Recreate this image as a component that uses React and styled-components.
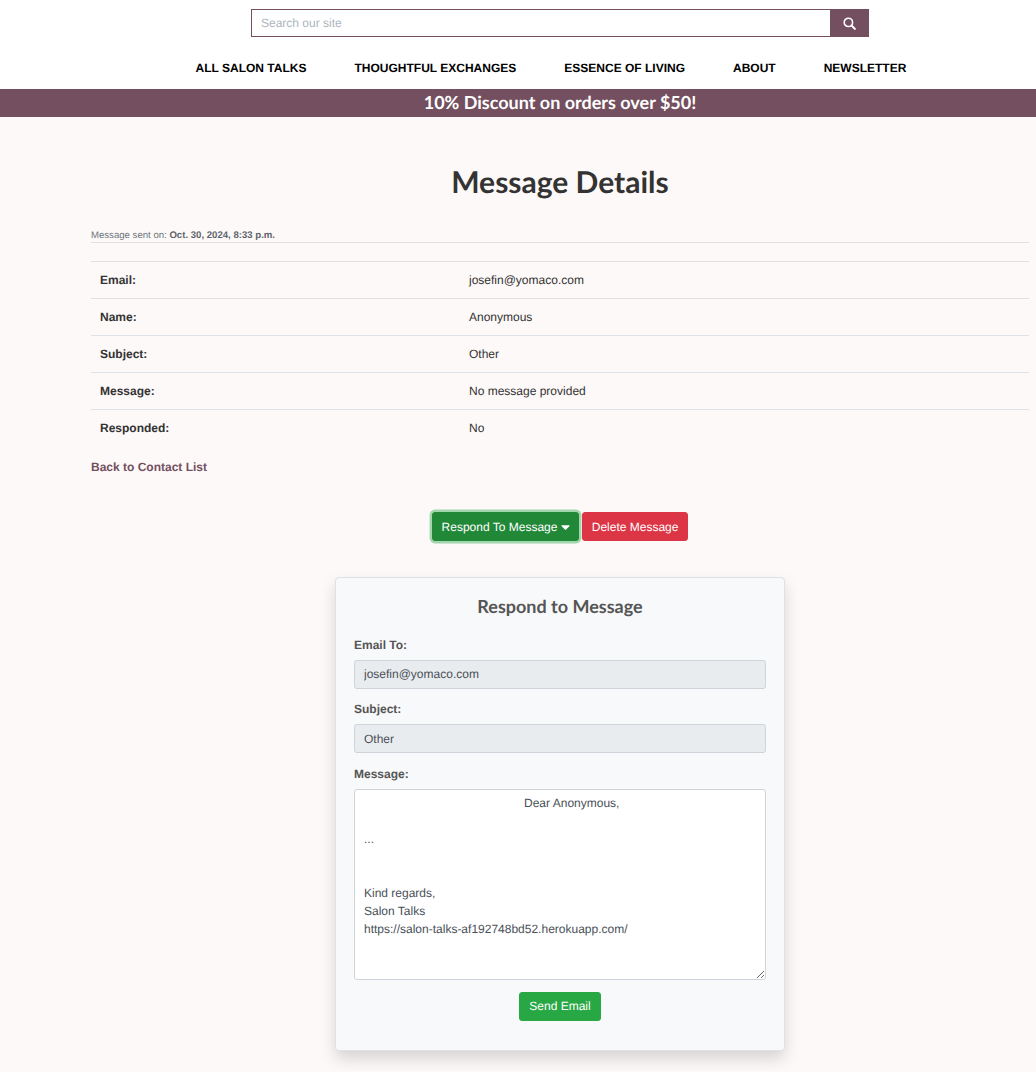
import React from 'react'
import styled, { createGlobalStyle } from 'styled-components'
import { FaCaretDown } from 'react-icons/fa'

const GlobalStyle = createGlobalStyle`
  * { box-sizing: border-box; }
  html, body { margin: 0; padding: 0; }
  body {
    background: #fff;
    font-family: "Liberation Sans", Arial, sans-serif;
    color: #333;
    text-rendering: geometricPrecision;
  }
  input, textarea, button { text-rendering: geometricPrecision; }
`

const Header = styled.header`
  background: #fff;
  height: 89px;
  padding-top: 9px;
`

const SearchForm = styled.form`
  display: flex;
  width: 618px;
  height: 28px;
  margin-left: 251px;
`

const SearchInput = styled.input`
  flex: 1;
  min-width: 0;
  border: 1px solid #734f5f;
  border-right: 0;
  outline: 0;
  padding: 0 9px;
  font: 12px "Liberation Sans", Arial, sans-serif;
  &::placeholder { color: #adb5bd; opacity: 1; }
`

const SearchButton = styled.button`
  width: 39px;
  border: 0;
  padding: 0;
  background: #734f5f;
  color: #fff;
  display: flex;
  align-items: center;
  justify-content: center;
`

const Nav = styled.nav`
  display: flex;
  gap: 48px;
  margin: 24px 0 0 195.6px;
`

const NavLink = styled.a`
  color: #000;
  font-size: 12px;
  font-weight: 700;
  line-height: 15px;
  text-decoration: none;
  white-space: nowrap;
`

const Banner = styled.div`
  height: 28px;
  padding: 0 7px 0 91px;
  background: #734f5f;
  color: #fff;
  text-align: center;
  font: 700 18px/27px Lato, sans-serif;
`

const Main = styled.main`
  background: #fdf9f8;
  height: 955px;
  padding: 46px 7px 0 91px;
  overflow: hidden;
`

const Title = styled.h1`
  margin: 0;
  text-align: center;
  color: #333;
  font: 700 30px/38px Lato, sans-serif;
`

const SentLine = styled.p`
  margin: 28px 0 0;
  border-bottom: 1px solid #dee2e6;
  color: #6c757d;
  font-size: 9.6px;
  line-height: 13px;
`

const SentDate = styled.strong`
  font-weight: 700;
  color: #5d646b;
`

const DetailsTable = styled.dl`
  margin: 18px 0 0;
  border-top: 1px solid #dee2e6;
`

const DetailRow = styled.div`
  display: grid;
  grid-template-columns: 369px 1fr;
  height: 37px;
  align-items: center;
  padding-left: 9px;
  border-bottom: 1px solid #dee2e6;
  font-size: 12px;
  &:last-child { border-bottom-color: transparent; }
`

const DetailTerm = styled.dt`
  font-weight: 700;
`

const DetailValue = styled.dd`
  margin: 0;
`

const BackLink = styled.a`
  display: block;
  margin-top: 13px;
  color: #734f5f;
  font-size: 12px;
  font-weight: 700;
  line-height: 15px;
  text-decoration: none;
`

const Actions = styled.div`
  display: flex;
  justify-content: center;
  gap: 3px;
  margin-top: 37px;
`

const Button = styled.button`
  height: 29px;
  padding: 0 9px;
  border: 1px solid ${p => p.$color};
  border-radius: 3px;
  background: ${p => p.$color};
  color: #fff;
  font: 12px "Liberation Sans", Arial, sans-serif;
  display: inline-flex;
  align-items: center;
  white-space: pre;
  box-shadow: ${p => (p.$focused ? '0 0 0 2.4px rgba(72, 180, 97, 0.5)' : 'none')};
  svg { width: 9px; height: 14px; margin-right: -1px; }
`

const Card = styled.section`
  width: 450px;
  height: 474px;
  margin: 36px auto 0;
  padding: 17px 18px 0;
  background: #f8f9fa;
  border: 1px solid #dee2e6;
  border-radius: 4px;
  box-shadow: 0 8px 16px rgba(0, 0, 0, 0.15);
  color: #555;
`

const CardTitle = styled.h2`
  margin: 0 0 20px;
  text-align: center;
  color: #555;
  font: 700 18px/23px Lato, sans-serif;
`

const Field = styled.div`
  margin-bottom: 13.9px;
`

const Label = styled.label`
  display: block;
  margin-bottom: 7px;
  font-size: 12px;
  font-weight: 700;
  line-height: 15px;
`

const ReadOnlyInput = styled.input`
  display: block;
  width: 100%;
  height: 28.5px;
  padding: 0 9px;
  border: 1px solid #ced4da;
  border-radius: 3px;
  background: #e9ecef;
  color: #495057;
  font: 12px "Liberation Sans", Arial, sans-serif;
  outline: 0;
`

const MessageBox = styled.textarea`
  display: block;
  width: 100%;
  height: 191px;
  padding: 4px 9px;
  border: 1px solid #ced4da;
  border-radius: 3px;
  background: #fff;
  color: #495057;
  font: 12px/18px "Liberation Sans", Arial, sans-serif;
  outline: 0;
`

const SendRow = styled.div`
  display: flex;
  justify-content: center;
  margin-top: -2px;
`

const detailRows = [
  ['Email:', 'josefin@yomaco.com'],
  ['Name:', 'Anonymous'],
  ['Subject:', 'Other'],
  ['Message:', 'No message provided'],
  ['Responded:', 'No'],
]

const navItems = ['ALL SALON TALKS', 'THOUGHTFUL EXCHANGES', 'ESSENCE OF LIVING', 'ABOUT', 'NEWSLETTER']

const messageText = `${' '.repeat(48)}Dear Anonymous,

...


Kind regards,
Salon Talks
https://salon-talks-af192748bd52.herokuapp.com/`

const SearchIcon = () => (
  <svg width="13" height="13" viewBox="0 0 14 14" fill="none" stroke="currentColor">
    <circle cx="5.8" cy="5.8" r="4.5" strokeWidth="1.7" />
    <path d="M9.2 9.2 L12.8 12.8" strokeWidth="2.2" strokeLinecap="round" />
  </svg>
)

export default function App() {
  return (
    <>
      <GlobalStyle />
      <Header>
        <SearchForm onSubmit={e => e.preventDefault()}>
          <SearchInput placeholder="Search our site" />
          <SearchButton type="submit" aria-label="Search"><SearchIcon /></SearchButton>
        </SearchForm>
        <Nav>
          {navItems.map(item => <NavLink key={item} href="#">{item}</NavLink>)}
        </Nav>
      </Header>
      <Banner>10% Discount on orders over $50!</Banner>
      <Main>
        <Title>Message Details</Title>
        <SentLine>Message sent on: <SentDate>Oct. 30, 2024, 8:33 p.m.</SentDate></SentLine>
        <DetailsTable>
          {detailRows.map(([term, value]) => (
            <DetailRow key={term}>
              <DetailTerm>{term}</DetailTerm>
              <DetailValue>{value}</DetailValue>
            </DetailRow>
          ))}
        </DetailsTable>
        <BackLink href="#">Back to Contact List</BackLink>
        <Actions>
          <Button $color="#218838" $focused>Respond To Message <FaCaretDown /></Button>
          <Button $color="#dc3545">Delete Message</Button>
        </Actions>
        <Card>
          <CardTitle>Respond to Message</CardTitle>
          <Field>
            <Label>Email To:</Label>
            <ReadOnlyInput readOnly value="josefin@yomaco.com" />
          </Field>
          <Field>
            <Label>Subject:</Label>
            <ReadOnlyInput readOnly value="Other" />
          </Field>
          <Field>
            <Label>Message:</Label>
            <MessageBox defaultValue={messageText} />
          </Field>
          <SendRow>
            <Button $color="#28a745">Send Email</Button>
          </SendRow>
        </Card>
      </Main>
    </>
  )
}
